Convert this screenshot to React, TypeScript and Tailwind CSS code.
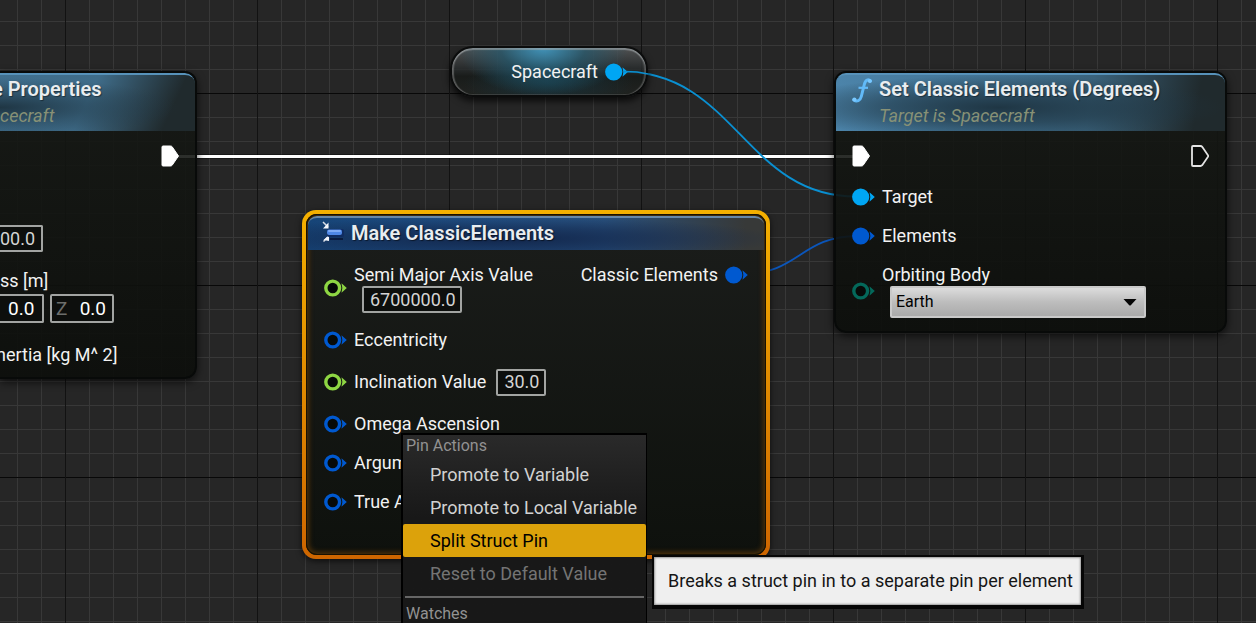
import type { ReactNode } from 'react';
import clsx from 'clsx';

type PinTone = 'object' | 'struct' | 'float' | 'enum';

const pinTones: Record<PinTone, string> = {
  object: 'text-[#00a6f4]',
  struct: 'text-[#0059d0]',
  float: 'text-[#8ed643]',
  enum: 'text-[#04685a]',
};

function Pin({ tone, filled = false }: { tone: PinTone; filled?: boolean }) {
  return (
    <svg className={clsx('h-[18px] w-[23px] shrink-0', pinTones[tone])} viewBox="0 0 23 18" aria-hidden="true">
      <circle
        cx="8.7"
        cy="9"
        r={filled ? 8.6 : 6.9}
        fill={filled ? 'currentColor' : '#070a08'}
        stroke={filled ? 'none' : 'currentColor'}
        strokeWidth="3.4"
      />
      <path d="M17.500 4.200 22.800 9l-5.300 4.800q1.700-4.800 0-9.600z" fill="currentColor" />
    </svg>
  );
}

function ExecPin({ filled = false }: { filled?: boolean }) {
  return (
    <svg className="h-[22px] w-[18px] shrink-0" viewBox="0 0 18 22" aria-hidden="true">
      <path
        d="M2 1h7.500q1 0 1.700.8L17.500 11l-6.300 9.200q-.7.8-1.700.8H2q-1 0-1-1V2q0-1 1-1z"
        fill={filled ? '#fff' : '#0b0d0b'}
        stroke={filled ? '#fff' : '#e4e4e4'}
        strokeWidth={filled ? 1 : 1.8}
      />
    </svg>
  );
}

function PinRow({ tone, filled, children }: { tone: PinTone; filled?: boolean; children: ReactNode }) {
  return (
    <div className="flex items-center gap-[7px] whitespace-nowrap">
      <Pin tone={tone} filled={filled} />
      {children}
    </div>
  );
}

function ValueInput({ label, value, className }: { label: string; value: string; className: string }) {
  return (
    <input
      aria-label={label}
      defaultValue={value}
      className={clsx('rounded-xs border-2 border-[#a2a4a2] bg-[#0d0f0d] outline-none', className)}
    />
  );
}

function FunctionHeader({ title, subtitle, icon }: { title: string; subtitle: string; icon?: boolean }) {
  return (
    <header
      className={clsx(
        'flex h-[58px] border-t-2 border-[#5792ba]',
        icon
          ? 'gap-[7px] rounded-t-[10px] bg-[radial-gradient(ellipse_at_42%_58%,#1f3644_0%,#1f364499_35%,transparent_70%),linear-gradient(100deg,#4c84aa_0%,#41708f_45%,#3a627b_65%,#202a2d_92%)] pl-4'
          : 'rounded-tr-[10px] bg-[radial-gradient(ellipse_at_0%_58%,#1f3644_0%,#1f364466_35%,transparent_65%),linear-gradient(115deg,#41708f_0%,#3f6c89_45%,#202a2d_85%)]',
      )}
    >
      {icon && (
        <svg className="mt-[3px] h-[25px] w-5 shrink-0" viewBox="0 0 20 25" fill="none" aria-hidden="true">
          <path
            d="M18.500 3C16.500 1 13.500 1.500 12.300 6.500L9.300 18.500C8.300 22.800 4.800 24 1.800 22"
            stroke="#62baf8"
            strokeWidth="3"
            strokeLinecap="round"
          />
          <path d="M6.500 9.800h9.500" stroke="#62baf8" strokeWidth="2.200" />
          <circle cx="17.800" cy="3" r="2" fill="#79c8ff" />
          <circle cx="2.400" cy="21.500" r="2.100" fill="#79c8ff" />
        </svg>
      )}
      <div className={clsx('whitespace-nowrap', !icon && '-ml-2')}>
        <h2 className="pt-0.5 text-xl leading-6 font-semibold text-[#e9edf0] [text-shadow:1px_1px_1px_#0006]">{title}</h2>
        <p className={clsx('pt-[3px] text-lg leading-6 text-[#879176] italic', !icon && 'pl-2')}>{subtitle}</p>
      </div>
    </header>
  );
}

function PropertiesNode() {
  return (
    <section className="absolute top-[71px] left-0 h-[308px] w-[197px] overflow-hidden rounded-r-xl border-y-2 border-r-2 border-[#080a09] bg-linear-to-b from-[#151814]/88 to-[#0c0e0b]/92 shadow-[0_3px_8px_#000a]">
      <FunctionHeader title="e Properties" subtitle="cecraft" />
      <div className="flex justify-end pt-3.5 pr-4">
        <ExecPin filled />
      </div>
      <div className="flex pt-[58px]">
        <ValueInput
          label="Mass"
          value="00.0"
          className="h-[27px] w-[43px] rounded-l-none border-l-0 text-lg text-[#d4d4d4]"
        />
      </div>
      <p className="pt-[17px] leading-6">ss [m]</p>
      <div className="flex gap-1.5 pt-px">
        <ValueInput
          label="Y"
          value="0.0"
          className="h-[29px] w-11 rounded-l-none border-l-0 pl-2 text-[19px] text-white"
        />
        <label className="flex h-[29px] w-16 items-center justify-between rounded-xs border-2 border-[#a2a4a2] bg-[#0d0f0d] pl-1 text-[19px]">
          <span className="text-[#6c6e6c]">Z</span>
          <input defaultValue="0.0" className="w-9 bg-transparent pr-1.5 text-right text-white outline-none" />
        </label>
      </div>
      <p className="-ml-1 pt-5 leading-6 whitespace-nowrap">nertia [kg M^ 2]</p>
    </section>
  );
}

function SpacecraftNode() {
  return (
    <section className="absolute top-[46px] left-[450px] flex h-[51px] w-[198px] items-center justify-end gap-[7px] rounded-[23px] border-2 border-[#0b0c0c] bg-[radial-gradient(ellipse_85px_48px_at_47%_0%,#3f9ac4e6,#235a70b0_50%,transparent_100%),radial-gradient(ellipse_85px_25px_at_50%_75%,#153541cc,transparent),linear-gradient(#5a5c5dcc,#272b2ccc_45%,#171a18dd_60%,#202320dd)] pr-[18px] shadow-[0_4px_7px_#000b,inset_0_2px_1px_#a3aaad99,inset_2px_0_1px_#8888,inset_-2px_0_1px_#8886,inset_0_-1px_1px_#6665]">
      <span>Spacecraft</span>
      <Pin tone="object" filled />
    </section>
  );
}

function SetElementsNode() {
  return (
    <section className="absolute top-[71px] left-[834px] h-[262px] w-[393px] rounded-xl border-2 border-[#080a09] bg-linear-to-b from-[#151814]/88 to-[#0c0e0b]/92 shadow-[0_3px_8px_#000a]">
      <FunctionHeader title="Set Classic Elements (Degrees)" subtitle="Target is Spacecraft" icon />
      <div className="flex items-center justify-between px-4 pt-3.5">
        <ExecPin filled />
        <ExecPin />
      </div>
      <div className="flex flex-col gap-[15px] px-4 pt-[18px]">
        <PinRow tone="object" filled>
          <span className="leading-6">Target</span>
        </PinRow>
        <PinRow tone="struct" filled>
          <span className="leading-6">Elements</span>
        </PinRow>
        <PinRow tone="enum">
          <div className="flex flex-col">
            <label htmlFor="orbiting-body" className="leading-[23px]">
              Orbiting Body
            </label>
            <div className="relative ml-2">
              <select
                id="orbiting-body"
                className="block h-8 w-64 appearance-none rounded-xs border-2 border-[#c9c9c9] bg-linear-to-b from-[#dcdcdc] via-[#bdbdbd] to-[#aaaaaa] pl-1 text-base text-black"
              >
                <option>Earth</option>
              </select>
              <svg className="pointer-events-none absolute top-3 right-[9px] h-2 w-[14px]" viewBox="0 0 14 8" aria-hidden="true">
                <path d="M0.500 1h13L8 7q-1 1-2 0z" fill="#060606" />
              </svg>
            </div>
          </div>
        </PinRow>
      </div>
    </section>
  );
}

function MakeElementsNode() {
  return (
    <section className="absolute top-[210px] left-[302px] h-[349px] w-[468px] rounded-[14px] bg-linear-to-b from-[#f4b000] to-[#cd6500] p-1 shadow-[0_2px_6px_#000a]">
      <div className="h-full rounded-[11px] bg-linear-to-b from-[#1b1d1b] to-[#0e110d] p-0.5 shadow-[inset_0_0_0_1px_#171102,inset_0_0_5px_3px_#4c300a]">
        <header className="flex h-[34px] items-start gap-1.5 rounded-t-[9px] border-t-2 border-[#6788a7] bg-[radial-gradient(ellipse_at_42%_65%,#12264b_0%,#12264b88_40%,transparent_75%),linear-gradient(90deg,#164477_0%,#225186_40%,#284f7b_65%,#373938_96%)] pt-[3px] pl-3.5">
          <svg className="h-[22px] w-[23px] shrink-0" viewBox="0 0 23 22" aria-hidden="true">
            <path d="M1 1l5 5M1.500 20.500l4-4" stroke="#d8dde5" strokeWidth="1.500" />
            <path d="M6.500 1.500v6H1zM7 20v-6L1.500 19z" fill="#f5f7fb" />
            <rect x="5" y="8" width="17" height="8" rx="2" fill="#102c61" />
            <rect x="5" y="8.500" width="15" height="5.500" rx="2" fill="#4f88e6" />
            <rect x="6" y="9" width="13" height="2" rx="1" fill="#7eabf5" />
            <path d="M8 18h13" stroke="#0a1b3e" strokeWidth="2" />
          </svg>
          <h2 className="text-xl leading-6 font-semibold text-[#e9edf0] [text-shadow:1px_1px_1px_#0008]">
            Make ClassicElements
          </h2>
        </header>
        <div className="flex items-start justify-between px-4 pt-[13px]">
          <div className="flex flex-col gap-[15px]">
            <PinRow tone="float">
              <div className="flex flex-col">
                <span className="leading-[23px]">Semi Major Axis Value</span>
                <ValueInput
                  label="Semi Major Axis Value"
                  value="6700000.0"
                  className="ml-2 h-[27px] w-[100px] pl-1.5 text-lg text-[#d4d4d4]"
                />
              </div>
            </PinRow>
            <PinRow tone="struct">
              <span className="leading-6">Eccentricity</span>
            </PinRow>
            <PinRow tone="float">
              <div className="flex h-[30px] items-center gap-2.5">
                <span>Inclination Value</span>
                <ValueInput
                  label="Inclination Value"
                  value="30.0"
                  className="h-[27px] w-[50px] pl-1.5 text-lg text-[#d4d4d4]"
                />
              </div>
            </PinRow>
            <PinRow tone="struct">
              <span className="leading-6">Omega Ascension</span>
            </PinRow>
            <PinRow tone="struct">
              <span className="leading-6">Argum</span>
            </PinRow>
            <PinRow tone="struct">
              <span className="leading-6">True A</span>
            </PinRow>
          </div>
          <div className="flex items-center gap-[7px]">
            <span className="leading-[23px]">Classic Elements</span>
            <Pin tone="struct" filled />
          </div>
        </div>
      </div>
    </section>
  );
}

const pinActions = [
  { label: 'Promote to Variable' },
  { label: 'Promote to Local Variable' },
  { label: 'Split Struct Pin', active: true },
  { label: 'Reset to Default Value', disabled: true },
];

function PinMenu() {
  return (
    <div
      role="menu"
      className="absolute top-[433px] left-[401px] h-60 w-[246px] border-2 border-r-1 border-black bg-linear-to-b from-[#2a2a2a] to-[#181818] to-35% text-[#d2d2d2]"
    >
      <p className="h-[23px] pl-[3px] text-base leading-[22px] text-[#929292]">Pin Actions</p>
      {pinActions.map(({ label, active, disabled }) => (
        <button
          key={label}
          type="button"
          role="menuitem"
          disabled={disabled}
          className={clsx(
            'block h-[33px] w-full pl-[27px] text-left whitespace-nowrap',
            active && 'rounded-xs bg-[#dca20b] text-black',
            disabled && 'text-[#747474]',
          )}
        >
          {label}
        </button>
      ))}
      <hr className="mx-0.5 mt-1.5 border-t-2 border-[#666]" />
      <p className="pt-1 pl-[3px] text-base text-[#929292]">Watches</p>
    </div>
  );
}

function Wires() {
  return (
    <svg className="absolute inset-0 h-full w-full" fill="none" aria-hidden="true">
      <path d="M176 156.500H855" stroke="#000" strokeOpacity=".35" strokeWidth="5" />
      <path d="M176 156.500H855" stroke="#fff" strokeWidth="3" />
      <path d="M622 71.500C735 71.500 745 196.500 856 196.500" stroke="#0a90d2" strokeWidth="1.800" />
      <path d="M742 274C800 274 800 236 858 236" stroke="#0b56bb" strokeWidth="1.800" />
    </svg>
  );
}

export default function App() {
  return (
    <main className="relative h-screen overflow-hidden bg-[#262626] font-[Roboto,sans-serif] text-lg text-[#f2f2f2]">
      {/* Fine 24px grid, with a dark line every eighth cell */}
      <div className="absolute inset-0 bg-[linear-gradient(90deg,#121212_1px,transparent_1px),linear-gradient(#080808_1px,transparent_1px),linear-gradient(90deg,#383838_1px,transparent_1px),linear-gradient(#383838_1px,transparent_1px)] bg-[size:192px_192px,192px_192px,24px_24px,24px_24px] bg-[position:65px_93px,65px_93px,17px_21px,17px_21px]" />
      <Wires />
      <PropertiesNode />
      <SpacecraftNode />
      <SetElementsNode />
      <MakeElementsNode />
      <PinMenu />
      {/* Lit end of the wire where it leaves the pill */}
      <svg className="pointer-events-none absolute top-[68px] left-[624px] h-3 w-6" viewBox="0 0 24 12" fill="none" aria-hidden="true">
        <path d="M0 3.500Q14 3.500 24 6" stroke="#0a90d2" strokeWidth="1.600" />
      </svg>
      <div
        role="tooltip"
        className="absolute top-[555px] left-[652px] border-2 border-r-3 border-b-4 border-[#060606] bg-[#efefef] py-3 pr-2 pl-3.5 leading-6 whitespace-nowrap text-[#151515] shadow-[inset_0_0_2px_1px_#999]"
      >
        Breaks a struct pin in to a separate pin per element
      </div>
    </main>
  );
}
